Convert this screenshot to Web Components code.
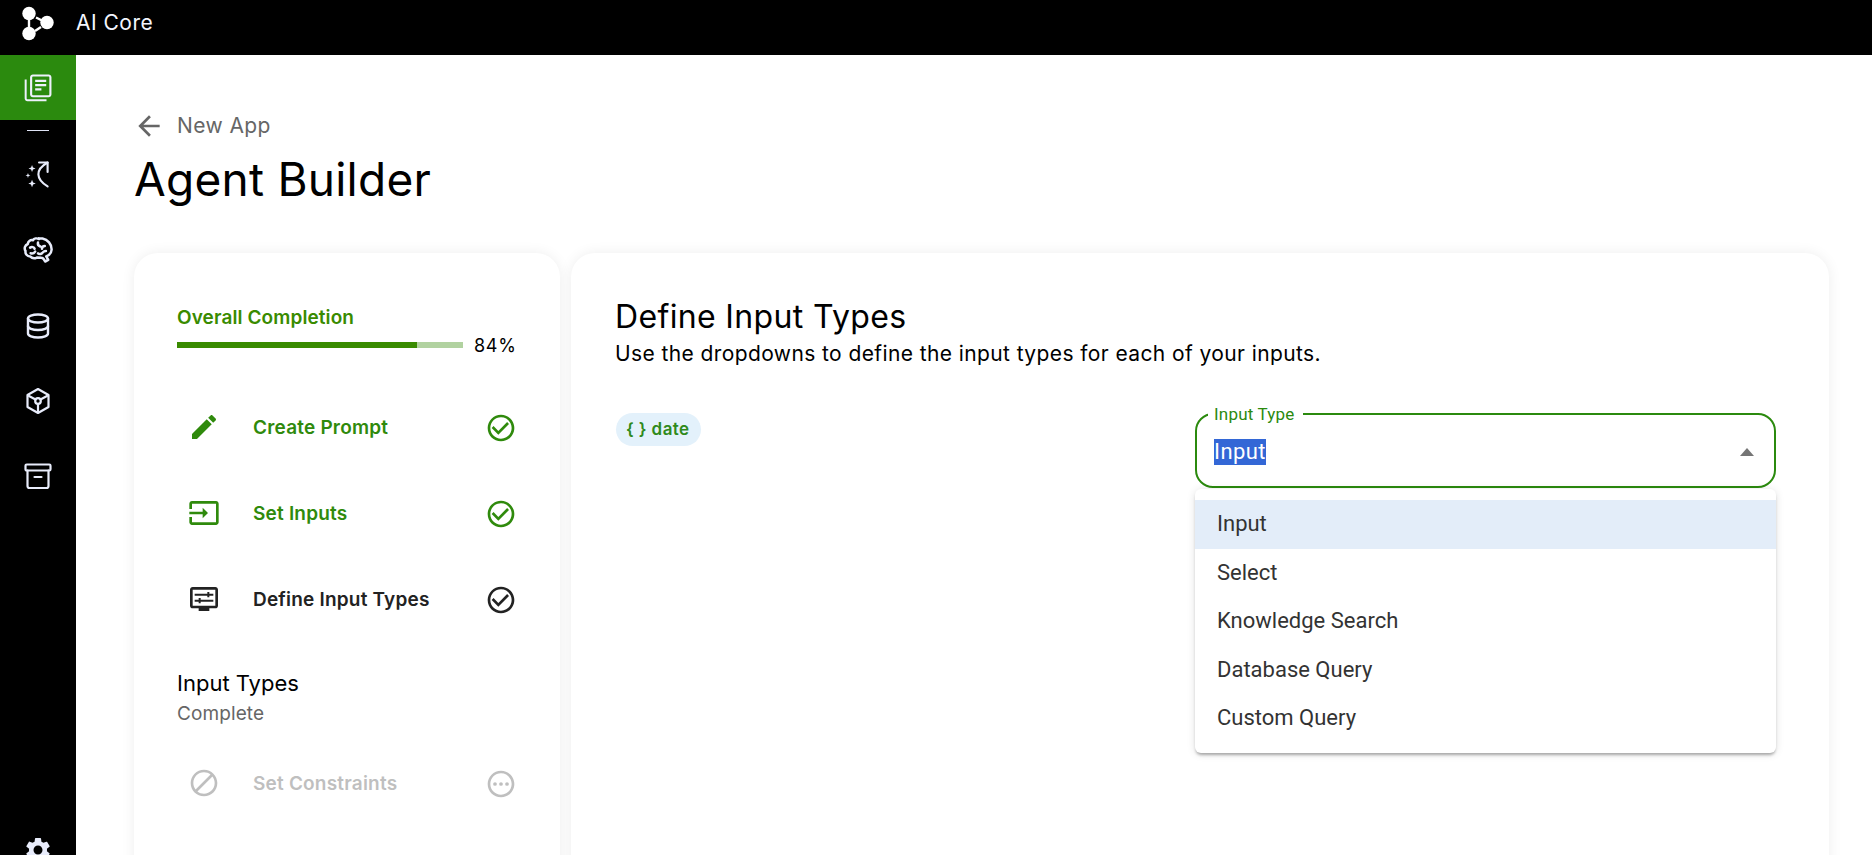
<!DOCTYPE html>
<html lang="en"><head><meta charset="utf-8"><title>Agent Builder</title>
<style>
html,body{margin:0;padding:0;height:855px;overflow:hidden;background:#fff;font-family:Inter,"Liberation Sans",sans-serif}
</style></head><body>
<ai-app></ai-app>
<template id="t-app"><style>
:host{display:grid;grid-template-columns:76px 1fr;grid-template-rows:55px 1fr;height:855px;overflow:hidden;background:#fff}
ai-topbar{grid-column:1/3}
main{padding:58px 43px 0 58px;min-width:0;overflow:hidden;background:#fff}
.cols{display:grid;grid-template-columns:426px 1fr;gap:11px;margin-top:48px;height:640px}
</style>
<ai-topbar></ai-topbar><ai-sidebar></ai-sidebar>
<main><ai-head></ai-head><div class="cols"><ai-steps></ai-steps><ai-define></ai-define></div></main>
</template>

<template id="t-topbar"><style>
:host{display:flex;align-items:center;background:#000;color:#f3f6ff;height:55px}
svg{width:40px;height:40px;margin-left:18px;margin-top:-6px;flex:none}
span{margin-left:18px;font-size:21px;letter-spacing:.5px;line-height:1;position:relative;top:-5px}
</style>
<svg viewBox="0 0 40 40"><g fill="#fff"><circle cx="11" cy="8.500" r="6.700"/><circle cx="11" cy="28.500" r="6.700"/><circle cx="29" cy="17.500" r="6.700"/></g><g stroke="#fff" stroke-width="2.400"><path d="M11 12v14"/><path d="M18 12.500l6 3"/><path d="M17 26l6-4"/></g></svg><span>AI Core</span>
</template>

<template id="t-sidebar"><style>
:host{display:flex;flex-direction:column;align-items:center;background:#000;color:#e8ecfb;height:800px;overflow:hidden}
.a{align-self:stretch;height:65px;background:#2b8a0e;display:flex;align-items:center;justify-content:center;flex:none;color:#eef1fc}
.a svg{width:34px;height:34px}
hr{width:22px;height:1px;border:0;background:#dfe3f5;margin:10px 0 0}
.i{height:75px;width:76px;display:flex;align-items:center;justify-content:center;flex:none}
.first{margin-top:7px}
svg{width:30px;height:30px;display:block}
svg.m{width:32px;height:32px;position:relative;top:-3px}
svg.br{width:34px;height:34px}
.g{margin-top:auto;height:auto;position:relative;top:10px}
</style>
<div class="a"><svg viewBox="0 0 24 24" fill="currentColor"><path d="M4 6H2.600v13.400c0 1.100.9 2 2 2H18V20H4.600c-.3 0-.6-.3-.6-.6V6z"/><path d="M19.500 2.400H8.400c-1.100 0-2 .9-2 2v12.200c0 1.100.9 2 2 2h11.100c1.100 0 2-.9 2-2V4.400c0-1.100-.9-2-2-2zm.5 14c0 .4-.3.7-.7.7H8.600c-.4 0-.7-.3-.7-.7V4.600c0-.4.3-.7.7-.7h10.700c.4 0 .7.3.7.7v11.800z"/><path d="M10 6.200h7.800v1.600H10zM10 9.200h7.800v1.600H10zM10 12.200h4.400v1.600H10z"/></svg></div>
<hr>
<div class="i first"><svg class="m" viewBox="0 0 30 30" fill="none" stroke="currentColor" stroke-width="2" stroke-linecap="round" stroke-linejoin="round"><path d="M24 27.600C13 21 12 12 24 5.200"/><path d="M16 5.200h8V14"/><g fill="currentColor" stroke="none"><path d="M9.400 7.500l.9 2.400 2.400.9-2.400.9-.9 2.400-.9-2.400-2.400-.9 2.400-.9z"/><path d="M5.600 15l.6 1.700 1.700.6-1.700.6-.6 1.700-.6-1.700-1.700-.6 1.700-.6z"/><path d="M9.400 21.300l1 2.500 2.500 1-2.500 1-1 2.500-1-2.500-2.500-1 2.500-1z"/></g></svg></div>
<div class="i"><svg class="br" viewBox="0 0 30 30" fill="none" stroke="currentColor" stroke-width="2.200" stroke-linecap="round" stroke-linejoin="round"><path d="M16 4.500c-2-1-4.500-.6-5.500 1-2.300-.5-4.500 1-4.500 3.300-2.500 1-3.500 4-2 6.200-.5 2.500 1.500 4.800 4 4.800 1.500 1.500 4 2 6 1l4 .2c1.200 0 2.300 1.300 3.300 3.300l2.700-1.500-1.700-3c2.600-1 4.500-2.800 4.700-6 .2-4.800-3.500-9-8-9.800-1-.1-2-.2-3-.1z"/><path d="M8 12c1.500-1 3.500-.5 4 1M15 7.500c-.5 2 .5 3 2 3.500M21 10.500c-1.500 0-2.500 1-2.500 2.500M8.500 17c1.500.5 3 0 4-1.500M15 17c1 1 3 1 4-.5M22 15c-1 0-2 .3-2.500 1"/></svg></div>
<div class="i"><svg viewBox="0 0 30 30" fill="none" stroke="currentColor" stroke-width="2.400" stroke-linecap="round" stroke-linejoin="round"><ellipse cx="15" cy="7.500" rx="10" ry="4"/><path d="M5 7.500v15c0 2.200 4.500 4 10 4s10-1.800 10-4v-15"/><path d="M5 15c0 2.200 4.500 4 10 4s10-1.800 10-4"/></svg></div>
<div class="i"><svg viewBox="0 0 30 30" fill="none" stroke="currentColor" stroke-width="2.200" stroke-linecap="round" stroke-linejoin="round"><path d="M15 3l10.500 6v12L15 27 4.500 21V9z"/><circle cx="15" cy="15" r="2.800"/><path d="M6 10l6.500 3.500M24 10l-6.500 3.500M15 18v8"/></svg></div>
<div class="i"><svg viewBox="0 0 30 30" fill="none" stroke="currentColor" stroke-width="2.200" stroke-linecap="round" stroke-linejoin="round"><rect x="2.500" y="3.500" width="25" height="6" rx="1.200"/><path d="M4.500 9.500v15.500a2 2 0 0 0 2 2h17a2 2 0 0 0 2-2V9.500"/><path d="M11.500 16h7"/></svg></div>
<div class="i g"><svg viewBox="0 0 24 24" fill="currentColor"><path d="M19.140 12.940c.04-.3.06-.61.06-.94 0-.32-.02-.64-.07-.94l2.030-1.580c.18-.14.23-.41.12-.61l-1.920-3.320c-.12-.22-.37-.29-.59-.22l-2.390.96c-.5-.38-1.030-.7-1.620-.94l-.36-2.540c-.04-.24-.24-.41-.48-.41h-3.840c-.24 0-.43.17-.47.41l-.36 2.540c-.59.24-1.130.57-1.620.94l-2.390-.96c-.22-.08-.47 0-.59.22L2.740 8.870c-.12.21-.08.47.12.61l2.030 1.580c-.05.3-.09.63-.09.94s.02.64.07.94l-2.030 1.580c-.18.14-.23.41-.12.61l1.920 3.320c.12.22.37.29.59.22l2.390-.96c.5.38 1.030.7 1.620.94l.36 2.540c.05.24.24.41.48.41h3.840c.24 0 .44-.17.47-.41l.36-2.540c.59-.24 1.130-.56 1.620-.94l2.390.96c.22.08.47 0 .59-.22l1.920-3.320c.12-.22.07-.47-.12-.61l-2.010-1.580zM12 15.600c-1.980 0-3.600-1.620-3.600-3.600s1.620-3.600 3.600-3.600 3.600 1.620 3.600 3.600-1.620 3.600-3.600 3.600z"/></svg></div>
</template>

<template id="t-head"><style>
:host{display:block;color:#000}
.b{display:flex;align-items:center;color:#666;font-size:21px;letter-spacing:.4px;line-height:26px;height:26px}
svg{width:32px;height:32px;margin-left:-1px;margin-right:12px;fill:#666;flex:none}
h1{margin:14px 0 0;font-weight:400;font-size:46px;line-height:52px;letter-spacing:.25px}
</style>
<div class="b"><svg viewBox="0 0 24 24"><path d="M20 11H7.830l5.590-5.590L12 4l-8 8 8 8 1.410-1.410L7.830 13H20v-2z"/></svg><span>New App</span></div>
<h1>Agent Builder</h1>
</template>

<template id="t-steps"><style>
:host{display:block;background:#fff;border-radius:24px;box-shadow:0 0 14px rgba(0,0,0,.07);padding:54px 43px 0 43px;height:100%;box-sizing:border-box;color:#000}
.o{color:#398b00;font-weight:600;font-size:19px;letter-spacing:.1px;line-height:22px}
.p{display:flex;align-items:center;margin-top:4px;height:24px}
.bar{width:286px;height:6px;background:#b1d2a0;flex:none;position:relative;display:flex}
.bar i{display:block;width:240px;background:#398b00}
.pct{margin-left:11px;font-size:18px;letter-spacing:.7px}
.list{margin-top:27px}
h3{margin:27px 0 0;font-weight:400;font-size:22px;line-height:28px}
.c{color:#666;font-size:19px;line-height:24px;margin-top:5px;letter-spacing:.1px}
.sp{height:14px}
</style>
<div class="o">Overall Completion</div>
<div class="p"><div class="bar"><i></i></div><span class="pct">84%</span></div>
<div class="list">
<ai-step state="done" label="Create Prompt" icon="edit"></ai-step>
<ai-step state="done" label="Set Inputs" icon="input"></ai-step>
<ai-step state="active" label="Define Input Types" icon="tune"></ai-step>
</div>
<h3>Input Types</h3><div class="c">Complete</div>
<div class="sp"></div>
<ai-step state="off" label="Set Constraints" icon="block"></ai-step>
</template>

<template id="t-define"><style>
:host{display:block;background:#fff;border-radius:24px;box-shadow:0 0 14px rgba(0,0,0,.07);padding:45px 53px 0 44px;height:100%;box-sizing:border-box;color:#000}
h2{margin:0;font-weight:400;font-size:32px;line-height:38px;letter-spacing:.35px}
p{margin:4px 0 0;font-size:21px;line-height:28px;letter-spacing:.4px}
.row{display:grid;grid-template-columns:1fr 581px;margin-top:37px;align-items:start}
.chip{display:inline-block;justify-self:start;background:#e3f1fb;color:#2f8a1b;border-radius:17px;height:33px;line-height:33px;padding:0 12px 0 10px;font-size:17px;letter-spacing:.4px;font-weight:600;margin-top:8px;margin-left:1px}
</style>
<h2>Define Input Types</h2>
<p>Use the dropdowns to define the input types for each of your inputs.</p>
<div class="row"><span class="chip">{ } date</span><ai-select></ai-select></div>
</template>

<template id="t-select"><style>
:host{display:block;position:relative;font-family:Roboto,"Liberation Sans",sans-serif}
fieldset{margin:0;padding:0 20px 0 17px;border:2px solid #2b8a0e;border-radius:18px;height:83px;box-sizing:border-box;display:flex;align-items:center;min-width:0}
legend{font-size:17px;letter-spacing:.2px;color:#2b8a0e;padding:0 8px 0 6px;margin-left:-6px;line-height:18px}
.v{font-size:22px;letter-spacing:.4px;line-height:26px;background:#3367d6;color:#fff;position:relative;top:-3px}
.s{flex:1;display:flex;align-items:center;justify-content:space-between}
svg{width:14px;height:8px;fill:#757575;position:relative;top:-3px}
.menu{position:absolute;left:0;right:0;top:84px;background:#fff;border-radius:6px;box-shadow:0 3px 3px -1px rgba(0,0,0,.3),0 1px 8px rgba(0,0,0,.12);padding:11px 0 10px;font-size:22px;color:#333;z-index:2}
.it{height:48.600px;line-height:48px;padding-left:22px}
.it.on{background:#e3edf9}
</style>
<fieldset><legend>Input Type</legend><div class="s"><span class="v">Input</span><svg viewBox="0 0 14 8"><path d="M7 0l7 8H0z"/></svg></div></fieldset>
<div class="menu"><div class="it on">Input</div><div class="it">Select</div><div class="it">Knowledge Search</div><div class="it">Database Query</div><div class="it">Custom Query</div></div>
</template>

<template id="t-step"><style>
:host{display:grid;grid-template-columns:54px 1fr 32px;column-gap:22px;align-items:center;height:86px;font-weight:600;font-size:19px;letter-spacing:.2px;color:var(--c)}
svg{width:32px;height:32px;fill:var(--c);display:block;justify-self:center}
.e{position:relative;top:1px}
</style>
<svg id="ic" viewBox="0 0 24 24"></svg><span id="l"></span><svg class="e" id="st" viewBox="0 0 24 24"></svg>
</template>

<script>
const P={
edit:'<path d="M3 17.250V21h3.750L17.810 9.940l-3.750-3.750L3 17.250zM20.710 7.040c.39-.39.39-1.020 0-1.410l-2.340-2.340c-.39-.39-1.020-.39-1.410 0l-1.830 1.830 3.750 3.750 1.830-1.830z"/>',
input:'<path d="M21 3.010H3c-1.100 0-2 .9-2 2V9h2V4.990h18v14.030H3V15H1v4.010c0 1.100.9 1.980 2 1.980h18c1.100 0 2-.88 2-1.980v-14c0-1.110-.9-2-2-2zM11 16l4-4-4-4v3H1v2h10v3z"/>',
tune:'<path d="M20.500 3h-17C2.400 3 1.500 3.900 1.500 5v12c0 1.100.9 2 2 2H8v2h8v-2h4.500c1.100 0 2-.9 2-2V5c0-1.100-.9-2-2-2zm0 14h-17V5h17v12z"/><path d="M5 8h9.500V6.800h1.500V8h3v1.500h-3v1.200h-1.500V9.500H5zM5 12.500h3v-1.200h1.500v1.200H19V14H9.500v1.200H8V14H5z"/>',
block:'<path d="M12 2C6.480 2 2 6.480 2 12s4.480 10 10 10 10-4.480 10-10S17.520 2 12 2zM4 12c0-4.420 3.580-8 8-8 1.850 0 3.550.63 4.900 1.690L5.690 16.900C4.630 15.550 4 13.850 4 12zm8 8c-1.850 0-3.550-.63-4.900-1.690L18.310 7.100C19.370 8.450 20 10.150 20 12c0 4.420-3.580 8-8 8z"/>',
check:'<path d="M16.590 7.580 10 14.170l-3.590-3.580L5 12l5 5 8-8zM12 2C6.480 2 2 6.480 2 12s4.480 10 10 10 10-4.480 10-10S17.520 2 12 2zm0 18c-4.420 0-8-3.580-8-8s3.580-8 8-8 8 3.580 8 8-3.580 8-8 8z"/>',
more:'<path d="M12 2C6.480 2 2 6.480 2 12s4.480 10 10 10 10-4.480 10-10S17.520 2 12 2zm0 18c-4.420 0-8-3.580-8-8s3.580-8 8-8 8 3.580 8 8-3.580 8-8 8z"/><circle cx="7.500" cy="12" r="1.400"/><circle cx="12" cy="12" r="1.400"/><circle cx="16.500" cy="12" r="1.400"/>'
};
function reg(name,tid){customElements.define(name,class extends HTMLElement{constructor(){super();this.attachShadow({mode:'open'}).appendChild(document.getElementById(tid).content.cloneNode(true));}});}
reg('ai-topbar','t-topbar');reg('ai-sidebar','t-sidebar');reg('ai-head','t-head');reg('ai-steps','t-steps');reg('ai-define','t-define');reg('ai-select','t-select');
customElements.define('ai-step',class extends HTMLElement{
constructor(){super();this.attachShadow({mode:'open'}).appendChild(document.getElementById('t-step').content.cloneNode(true));}
connectedCallback(){const s=this.getAttribute('state'),r=this.shadowRoot;
this.style.setProperty('--c',{done:'#2f8a0c',active:'#222',off:'#bfbfbf'}[s]);
r.getElementById('ic').innerHTML=P[this.getAttribute('icon')];
r.getElementById('l').textContent=this.getAttribute('label');
r.getElementById('st').innerHTML=s==='off'?P.more:P.check;}
});
reg('ai-app','t-app');
</script>
</body></html>
